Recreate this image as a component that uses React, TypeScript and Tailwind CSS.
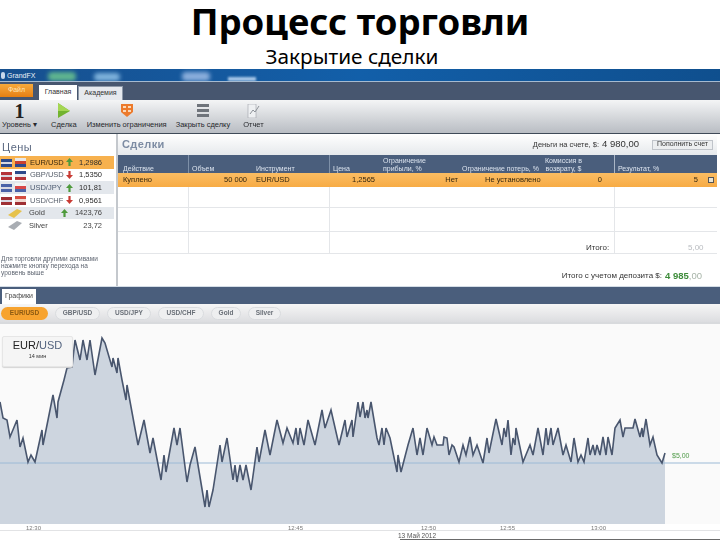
const chartPoints: [number, number][] = [
  [0, 402], [3, 418], [7, 420], [10, 437], [17, 420], [20, 447], [23, 438], [28, 462], [31, 455], [35, 462], [42, 430], [43, 445],
  [53, 395], [57, 418], [58, 402], [64, 380], [67, 368], [72, 367], [75, 340], [80, 360], [83, 340], [87, 360], [90, 340], [95, 375],
  [102, 338], [105, 343], [112, 367], [113, 358], [117, 373], [118, 358], [122, 380], [126, 400], [127, 385], [138, 445], [144, 420],
  [150, 453], [153, 438], [161, 480], [164, 455], [166, 472], [174, 428], [177, 445], [180, 428], [187, 482], [190, 465], [195, 447],
  [205, 507], [207, 490], [209, 507], [213, 490], [220, 445], [222, 462], [227, 438], [233, 480], [235, 465], [237, 482], [240, 465],
  [243, 480], [246, 465], [251, 490], [257, 447], [259, 462], [265, 430], [270, 455], [277, 420], [283, 443], [287, 428], [293, 443],
  [296, 428], [298, 445], [300, 428], [304, 445], [308, 420], [315, 445], [322, 410], [325, 428], [331, 410], [339, 445], [345, 420],
  [347, 437], [352, 420], [353, 437], [358, 402], [360, 417], [363, 402], [365, 418], [367, 410], [368, 418], [371, 402], [377, 438],
  [379, 445], [382, 428], [384, 445], [386, 428], [390, 438], [397, 472], [398, 455], [401, 472], [408, 445], [413, 428], [417, 455],
  [420, 438], [423, 455], [427, 428], [432, 445], [434, 437], [437, 445], [443, 445], [444, 437], [447, 438], [449, 455], [452, 445],
  [454, 447], [459, 462], [463, 445], [466, 455], [470, 437], [473, 455], [477, 445], [483, 463], [487, 438], [489, 453], [496, 419],
  [502, 445], [504, 428], [506, 437], [508, 420], [511, 455], [513, 438], [515, 445], [516, 428], [523, 462], [530, 445], [533, 455],
  [538, 428], [543, 455], [546, 428], [548, 445], [551, 428], [553, 445], [558, 428], [563, 455], [566, 445], [571, 462], [574, 438],
  [578, 462], [581, 455], [584, 462], [588, 438], [590, 455], [593, 445], [595, 455], [597, 445], [600, 455], [603, 437], [606, 455],
  [608, 437], [612, 455], [615, 428], [620, 420], [623, 437], [625, 428], [633, 428], [635, 419], [640, 437], [642, 428], [643, 437],
  [646, 419], [650, 445], [653, 437], [657, 455], [662, 463], [665, 453],
];

const linePoints = chartPoints.map(([x, y]) => `${x},${y}`).join(" ");

const prices = [
  { name: "EUR/USD", up: true, price: "1,2986", a: "#2c4a8c", b: "#e8e8e8", c: "#c9402f" },
  { name: "GBP/USD", up: false, price: "1,5350", a: "#b5343a", b: "#2c4a8c", c: "#e9e9ef" },
  { name: "USD/JPY", up: true, price: "101,81", a: "#4a62a8", b: "#f3f3f3", c: "#d8484a" },
  { name: "USD/CHF", up: false, price: "0,9561", a: "#9f3034", b: "#d44d40", c: "#f0d8d0" },
];

const chips = [
  { name: "GBP/USD", width: "w-[45px]" },
  { name: "USD/JPY", width: "w-[44px]" },
  { name: "USD/CHF", width: "w-[46px]" },
  { name: "Gold", width: "w-[30px]" },
  { name: "Silver", width: "w-[33px]" },
];

const columns = "grid grid-cols-[70px_66px_75px_51px_82px_80px_72px_103px]";

function FlagPair({ a, b, c }: { a: string; b: string; c: string }) {
  return (
    <svg width="26" height="9" viewBox="0 0 26 9">
      <rect x="0" y="1" width="11" height="8" fill={a} />
      <rect x="0" y="4" width="11" height="2" fill="#d8d8e2" />
      <rect x="14" y="0" width="11" height="3" fill={b} />
      <rect x="14" y="3" width="11" height="3" fill={c} />
      <rect x="14" y="6" width="11" height="3" fill={a} />
    </svg>
  );
}

function Arrow({ up }: { up: boolean }) {
  return (
    <svg width="7" height="8" viewBox="0 0 7 8">
      {up ? (
        <path d="M3.5 0 7 4H4.6v4H2.4V4H0z" fill="#4e9a3c" />
      ) : (
        <path d="M3.5 8 7 4H4.6V0H2.4v4H0z" fill="#c83b34" />
      )}
    </svg>
  );
}

function RibbonButton({ label, icon }: { label: string; icon: React.ReactNode }) {
  return (
    <div className="flex h-full flex-col items-center justify-between whitespace-nowrap pb-[4px] pt-[2px]">
      <div className="flex h-[17px] items-center">{icon}</div>
      <span className="text-[7.5px] leading-[9px] text-[#26282c]">{label}</span>
    </div>
  );
}

function EmptyRow({ height }: { height: string }) {
  return (
    <div className={`${columns} ${height} border-b border-[#e4e6e9]`}>
      <span className="col-start-2 border-l border-[#e4e6e9]" />
      <span className="col-start-4 border-l border-[#e4e6e9]" />
      <span className="col-start-8 border-l border-[#e4e6e9]" />
    </div>
  );
}

export default function App() {
  return (
    <div className="h-[540px] w-[720px] overflow-hidden bg-white font-['Liberation_Sans',sans-serif]">
      <div className="flex h-[69px] flex-col items-center font-['Noto_Sans',sans-serif] text-black">
        <h1 className="h-[43px] text-[36.5px] font-bold leading-[43px]">Процесс торговли</h1>
        <p className="ml-[-16px] text-[20.8px] leading-[26px]">Закрытие сделки</p>
      </div>

      <div className="blur-[0.35px]">
        {/* window title */}
        <div className="relative flex h-[12px] items-center gap-[2px] overflow-hidden bg-gradient-to-r from-[#17508f] via-[#125fa9] to-[#0f4f8e] pl-[1px]">
          <div className="absolute left-[48px] top-[3px] h-[9px] w-[28px] rounded-sm bg-[#5fb58f] blur-[2px]" />
          <div className="absolute left-[94px] top-[4px] h-[8px] w-[26px] rounded-sm bg-[#7fb3dc] blur-[2px]" />
          <div className="absolute left-[182px] top-[3px] h-[9px] w-[28px] rounded-sm bg-[#8aaedc] blur-[2px]" />
          <div className="absolute left-[228px] top-[8px] h-[4px] w-[28px] bg-[#a8c8e8] blur-[1px]" />
          <span className="relative h-[7px] w-[4px] rounded-sm bg-[#c8d8ea]" />
          <span className="relative text-[7px] leading-none text-[#eef2f7]">GrandFX</span>
        </div>

        {/* tabs */}
        <div className="flex h-[19px] items-end gap-[1px] border-t border-[#a6bad0] bg-[#47566f]">
          <div className="mb-[3px] flex h-[13px] w-[33px] items-center justify-center bg-gradient-to-b from-[#f6a93a] to-[#e67f10] text-[7px] text-[#ffe6b8]">
            Файл
          </div>
          <div className="ml-[5px] flex h-[15px] w-[38px] items-center justify-center bg-white text-[7px] text-[#333]">
            Главная
          </div>
          <div className="flex h-[14px] w-[45px] items-center justify-center border-x border-t border-[#8d98a8] bg-[#e6e9ee] text-[7px] text-[#333]">
            Академия
          </div>
        </div>

        {/* ribbon */}
        <div className="flex h-[34px] items-stretch gap-[20px] border-b border-[#3f4a58] bg-gradient-to-b from-[#f4f5f6] to-[#b9bdc3] pl-[2px]">
          <RibbonButton
            label="Уровень ▾"
            icon={<span className="font-['Liberation_Serif',serif] text-[20px] font-bold leading-none text-[#222]">1</span>}
          />
          <div className="ml-[-6px]">
            <RibbonButton
              label="Сделка"
              icon={
                <svg width="14" height="17" viewBox="0 0 14 17">
                  <path d="M1 1 13 9 1 16z" fill="#72b32f" />
                  <path d="M1 1 13 9 1 9z" fill="#a4d653" />
                </svg>
              }
            />
          </div>
          <div className="ml-[-10px]">
            <RibbonButton
              label="Изменить ограничения"
              icon={
                <svg width="14" height="15" viewBox="0 0 14 15">
                  <path d="M1 1h12v8l-6 5-6-5z" fill="#ec7a2c" />
                  <path d="M3 3h3v2H3zm5 0h3v2H8zM3 7h3v2H3zm5 0h3v2H8z" fill="#fbd9b8" />
                </svg>
              }
            />
          </div>
          <div className="ml-[-11px]">
            <RibbonButton
              label="Закрыть сделку"
              icon={
                <svg width="12" height="13" viewBox="0 0 12 13">
                  <path d="M0 0h12v3H0zm0 5h12v3H0zm0 5h12v3H0z" fill="#6f747b" />
                </svg>
              }
            />
          </div>
          <div className="ml-[-7px]">
            <RibbonButton
              label="Отчет"
              icon={
                <svg width="13" height="14" viewBox="0 0 13 14">
                  <path d="M1 0h8v14H1z" fill="#eef0f2" stroke="#9ea3aa" strokeWidth=".6" />
                  <path d="M3 10 6 6l2 2 4-6" fill="none" stroke="#8d9298" />
                </svg>
              }
            />
          </div>
        </div>

        {/* prices and deals */}
        <div className="flex h-[152px]">
          <div className="flex w-[116px] flex-col pr-[2px]">
            <div className="flex h-[22px] items-center pl-[2px] pt-[4px] text-[11px] tracking-[0.5px] text-[#5a6880]">Цены</div>
            {prices.map((p, i) => (
              <div
                key={p.name}
                className={`flex h-[12.7px] items-center pl-[1px] pr-[12px] text-[7.5px] ${
                  i === 0 ? "bg-[#f7b14e] text-[#3a2a10]" : i === 2 ? "bg-[#e3e7ec] text-[#4d5b70]" : "text-[#59606c]"
                }`}
              >
                <FlagPair a={p.a} b={p.b} c={p.c} />
                <span className="ml-[3px] w-[36px]">{p.name}</span>
                <Arrow up={p.up} />
                <span className="ml-auto text-[#2b2b2b]">{p.price}</span>
              </div>
            ))}
            <div className="flex h-[12.7px] items-center bg-[#e3e7ec] pl-[8px] pr-[12px] text-[7.5px] text-[#444]">
              <svg width="14" height="9" viewBox="0 0 14 9">
                <path d="M0 6 9 0l5 2-8 7z" fill="#e6c24c" />
              </svg>
              <span className="ml-[7px] w-[32px]">Gold</span>
              <Arrow up />
              <span className="ml-auto">1423,76</span>
            </div>
            <div className="flex h-[12.7px] items-center pl-[8px] pr-[12px] text-[7.5px] text-[#444]">
              <svg width="14" height="9" viewBox="0 0 14 9">
                <path d="M0 6 9 0l5 2-8 7z" fill="#a9adb3" />
              </svg>
              <span className="ml-[7px]">Silver</span>
              <span className="ml-auto">23,72</span>
            </div>
            <p className="mt-[23px] whitespace-nowrap px-[1px] text-[6.5px] leading-[7px] text-[#5d6470]">
              Для торговли другими активами
              <br />
              нажмите кнопку перехода на
              <br />
              уровень выше
            </p>
          </div>

          <div className="w-[2px] bg-[#c4c8cd]" />

          <div className="flex flex-1 flex-col pr-[3px]">
            <div className="flex h-[21px] items-center bg-gradient-to-b from-[#ffffff] to-[#e6e9ec] pl-[4px]">
              <span className="text-[11px] font-bold tracking-[0.4px] text-[#7d8ca3]">Сделки</span>
              <span className="ml-auto text-[7.5px] text-[#333]">Деньги на счете, $:</span>
              <span className="ml-[3px] text-[9.5px] text-[#333]">4 980,00</span>
              <span className="ml-[13px] mr-[4px] flex h-[10px] w-[61px] items-center justify-center border border-[#c0c4ca] bg-[#eceef0] text-[7px] text-[#333]">
                Пополнить счет
              </span>
            </div>

            <div className={`${columns} h-[18px] bg-[#4a5e7c] text-[7px] leading-[7.5px] text-[#dbe3ee]`}>
              <span className="flex items-end pb-[1px] pl-[5px]">Действие</span>
              <span className="flex items-end border-l border-[#7e90a8] pb-[1px] pl-[3px]">Объем</span>
              <span className="flex items-end pb-[1px] pl-[2px]">Инструмент</span>
              <span className="flex items-end border-l border-[#7e90a8] pb-[1px] pl-[3px]">Цена</span>
              <span className="flex items-end whitespace-nowrap pb-[1px] pl-[3px]">
                <span>
                  Ограничение
                  <br />
                  прибыли, %
                </span>
              </span>
              <span className="flex items-end whitespace-nowrap pb-[1px]">Ограничение потерь, %</span>
              <span className="flex items-end whitespace-nowrap pb-[1px] pl-[3px]">
                <span className="text-center">
                  Комиссия в
                  <br />
                  возврату, $
                </span>
              </span>
              <span className="flex items-end border-l border-[#aab6c6] pb-[1px] pl-[3px]">Результат, %</span>
            </div>
            <div className={`${columns} h-[14px] items-center bg-gradient-to-b from-[#fbbd62] to-[#f7ab44] text-[7.5px] text-[#33260f]`}>
              <span className="pl-[5px]">Куплено</span>
              <span className="pr-[7px] text-right">50 000</span>
              <span className="pl-[2px]">EUR/USD</span>
              <span className="pr-[5px] text-right">1,2565</span>
              <span className="pr-[4px] text-right">Нет</span>
              <span className="whitespace-nowrap pl-[23px]">Не установлено</span>
              <span className="pr-[12px] text-right">0</span>
              <span className="flex items-center justify-end gap-[10px] pr-[3px]">
                5
                <span className="h-[6px] w-[6px] border border-[#555] bg-[#e9e3d2]" />
              </span>
            </div>
            <EmptyRow height="h-[21px]" />
            <EmptyRow height="h-[24px]" />
            <div className="relative">
              <EmptyRow height="h-[22px]" />
              <span className="absolute left-[468px] top-[11px] text-[8px] leading-[9px] text-[#333]">Итого:</span>
              <span className="absolute left-[570px] top-[11px] text-[8px] leading-[9px] text-[#b9bcc0]">5,00</span>
            </div>
            <div className="flex h-[32px] items-end justify-end pb-[5px] pr-[15px] text-[8px] leading-[11px] text-[#333]">
              Итого с учетом депозита $:
              <span className="ml-[3px] text-[9.5px] font-bold text-[#3d8c3a]">4 985</span>
              <span className="text-[9.5px] text-[#a7b4a8]">,00</span>
            </div>
          </div>
        </div>

        {/* chart tabs */}
        <div className="flex h-[18px] items-end border-t border-[#d4dde6] bg-[#4a5e7c] pl-[2px]">
          <div className="flex h-[15px] w-[34px] items-center justify-center bg-white text-[7px] text-[#444]">Графики</div>
        </div>
        <div className="flex h-[20px] items-center gap-[7px] border-b-2 border-[#d8dadd] bg-gradient-to-b from-[#f6f6f6] to-[#dcdde0] pl-[1px] text-[6.5px] font-bold text-[#6a7078]">
          <span className="flex h-[13px] w-[47px] items-center justify-center rounded-full bg-[#f7a32f] text-[#8c5a12]">EUR/USD</span>
          {chips.map((chip) => (
            <span
              key={chip.name}
              className={`flex h-[13px] ${chip.width} items-center justify-center rounded-full border border-[#d9dbde] bg-[#eeeff0]`}
            >
              {chip.name}
            </span>
          ))}
        </div>

        {/* chart */}
        <div className="relative h-[216px] bg-[#fafafa]">
          <svg width="720" height="216" viewBox="0 324 720 216" className="block">
            <polygon points={`0,524 ${linePoints} 665,524`} fill="#cdd5df" />
            <rect x="0" y="524" width="720" height="16" fill="#ffffff" />
            <rect x="0" y="530" width="720" height="1" fill="#e2e3e5" />
            <line x1="0" y1="463" x2="720" y2="463" stroke="#9cbad6" strokeWidth="1" />
            <polyline points={linePoints} fill="none" stroke="#49566e" strokeWidth="1.6" />
            <rect x="400" y="539" width="320" height="1" fill="#6a6a6a" />
          </svg>
          <div className="absolute left-[2px] top-[12px] flex h-[31px] w-[71px] flex-col items-center rounded-[2px] border border-[#e6e6e6] bg-[#f5f5f5] pt-[2px] shadow-[0_1px_1px_#d4d4d4]">
            <span className="text-[11px] leading-[13px] text-[#222]">
              EUR/<span className="text-[#52627e]">USD</span>
            </span>
            <span className="text-[5.5px] leading-[8px] text-[#333]">14 мин</span>
          </div>
          <span className="absolute left-[672px] top-[127px] text-[7px] text-[#4f9a48]">$5,00</span>
          <span className="absolute left-[26px] top-[200px] text-[6px] text-[#777]">12:30</span>
          <span className="absolute left-[288px] top-[200px] text-[6px] text-[#777]">12:45</span>
          <span className="absolute left-[421px] top-[200px] text-[6px] text-[#777]">12:50</span>
          <span className="absolute left-[500px] top-[200px] text-[6px] text-[#777]">12:55</span>
          <span className="absolute left-[591px] top-[200px] text-[6px] text-[#777]">13:00</span>
          <span className="absolute left-[398px] top-[207px] text-[6.5px] text-[#555]">13 Май 2012</span>
        </div>
      </div>
    </div>
  );
}
